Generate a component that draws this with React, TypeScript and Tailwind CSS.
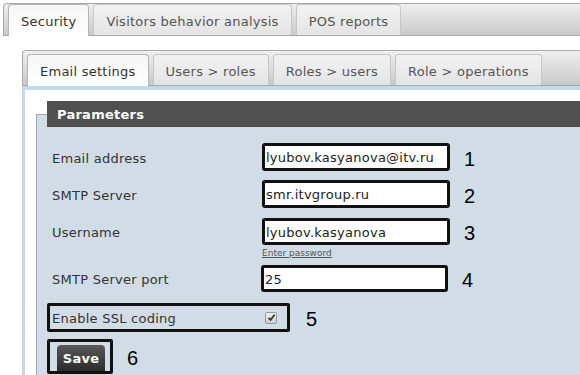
import React from "react";

const outerTabs = ["Security", "Visitors behavior analysis", "POS reports"];
const innerTabs = ["Email settings", "Users > roles", "Roles > users", "Role > operations"];

function TabBar({ tabs, className }: { tabs: string[]; className: string }) {
  return (
    <div
      className={`flex items-end gap-[4px] pl-[4px] border-t border-l border-b border-[#a9a9a9] rounded-tl-[4px] bg-gradient-to-b from-[#efefef] to-[#c9c9c9] ${className}`}
    >
      {tabs.map((t, i) =>
        i === 0 ? (
          <div
            key={t}
            className="h-[32px] -mb-px px-[12px] pt-[3px] flex items-center rounded-t-[4px] border-t border-l border-r border-[#b5b5b5] bg-gradient-to-b from-[#f6f6f6] to-white text-[#333]"
          >
            {t}
          </div>
        ) : (
          <div
            key={t}
            className="h-[31px] px-[12px] pt-[3px] flex items-center rounded-t-[4px] border-t border-l border-r border-[#c6c6c6] bg-gradient-to-b from-[#f2f2f2] to-[#e4e4e4] text-[#555]"
          >
            {t}
          </div>
        )
      )}
    </div>
  );
}

function Num({ n, className = "" }: { n: string; className?: string }) {
  return (
    <span className={`pt-[3px] text-[20px] tracking-normal text-black font-['Liberation_Sans',Arial,sans-serif] ${className}`}>
      {n}
    </span>
  );
}

function Field({
  label,
  value,
  n,
  labelW = "w-[215px]",
  inputW = "w-[188px]",
  h = "h-[28px]",
  className = "",
}: {
  label: string;
  value: string;
  n: string;
  labelW?: string;
  inputW?: string;
  h?: string;
  className?: string;
}) {
  return (
    <div className={`flex items-center ${h} ${className}`}>
      <span className={`${labelW} pl-[5px] pt-[3px] text-[#333]`}>{label}</span>
      <div
        className={`${inputW} ${h} border-[3px] border-[#111] rounded-[3px] bg-white pl-[1px] pt-[2px] flex items-center text-[#222]`}
      >
        {value}
      </div>
      <Num n={n} className="ml-[14px]" />
    </div>
  );
}

export default function App() {
  return (
    <div className="w-[580px] h-[375px] overflow-hidden bg-white flex flex-col font-['DejaVu_Sans',Verdana,sans-serif] text-[13px] tracking-[0.25px]">
      <TabBar tabs={outerTabs} className="ml-[3px] mt-[3px] h-[35px]" />

      <div className="ml-[22px] mt-[14px] flex flex-col flex-1">
        <TabBar tabs={innerTabs} className="h-[36px]" />

        <div className="flex-1 border-l-[3px] border-t-[4px] border-[#c5d9ee] bg-white">
          <div className="ml-[11px] mt-[24px] h-[300px] border-l border-t border-[#9aa5af] bg-[#d1dce7]">
            <div className="-mt-[14px] ml-[10px] h-[26px] bg-[#505050] pl-[10px] pt-[2px] leading-[24px] font-bold text-white">
              Parameters
            </div>

            <div className="pl-[10px] mt-[16px] flex flex-col">
              <Field label="Email address" value="lyubov.kasyanova@itv.ru" n="1" />
              <Field label="SMTP Server" value="smr.itvgroup.ru" n="2" className="mt-[9px]" />
              <Field label="Username" value="lyubov.kasyanova" n="3" h="h-[27px]" className="mt-[10px]" />
              <a href="#" className="ml-[215px] mt-[3px] text-[9px] leading-[10px] tracking-normal text-[#555] underline w-fit">
                Enter password
              </a>
              <Field
                label="SMTP Server port"
                value="25"
                n="4"
                labelW="w-[214px]"
                inputW="w-[187px]"
                h="h-[27px]"
                className="mt-[7px]"
              />

              <div className="mt-[9px] flex items-center">
                <div className="w-[243px] h-[29px] border-[3px] border-[#111] rounded-[2px] flex items-center pl-[2px]">
                  <span className="w-[213px] pt-[2px] text-[#333]">Enable SSL coding</span>
                  <span className="w-[12px] h-[12px] border border-[#9a9a9a] rounded-[2px] bg-gradient-to-b from-[#f0f0f0] to-[#cfcfcf] flex items-center justify-center">
                    <svg width="9" height="9" viewBox="0 0 9 9">
                      <path d="M1.5 4.8 L3.6 6.8 L7.6 1.8" stroke="#333" strokeWidth="1.8" fill="none" />
                    </svg>
                  </span>
                </div>
                <Num n="5" className="ml-[16px]" />
              </div>

              <div className="mt-[5px] flex items-center">
                <div className="w-[66px] h-[35px] border-[3px] border-[#111] rounded-[2px] pl-[7px] pt-[3px] overflow-hidden">
                  <button className="w-[48px] h-[32px] rounded-[4px] bg-gradient-to-b from-[#5a5a5a] to-[#222] text-white font-bold text-[13px] pb-[4px]">
                    Save
                  </button>
                </div>
                <Num n="6" className="ml-[14px]" />
              </div>
            </div>
          </div>
        </div>
      </div>
    </div>
  );
}
